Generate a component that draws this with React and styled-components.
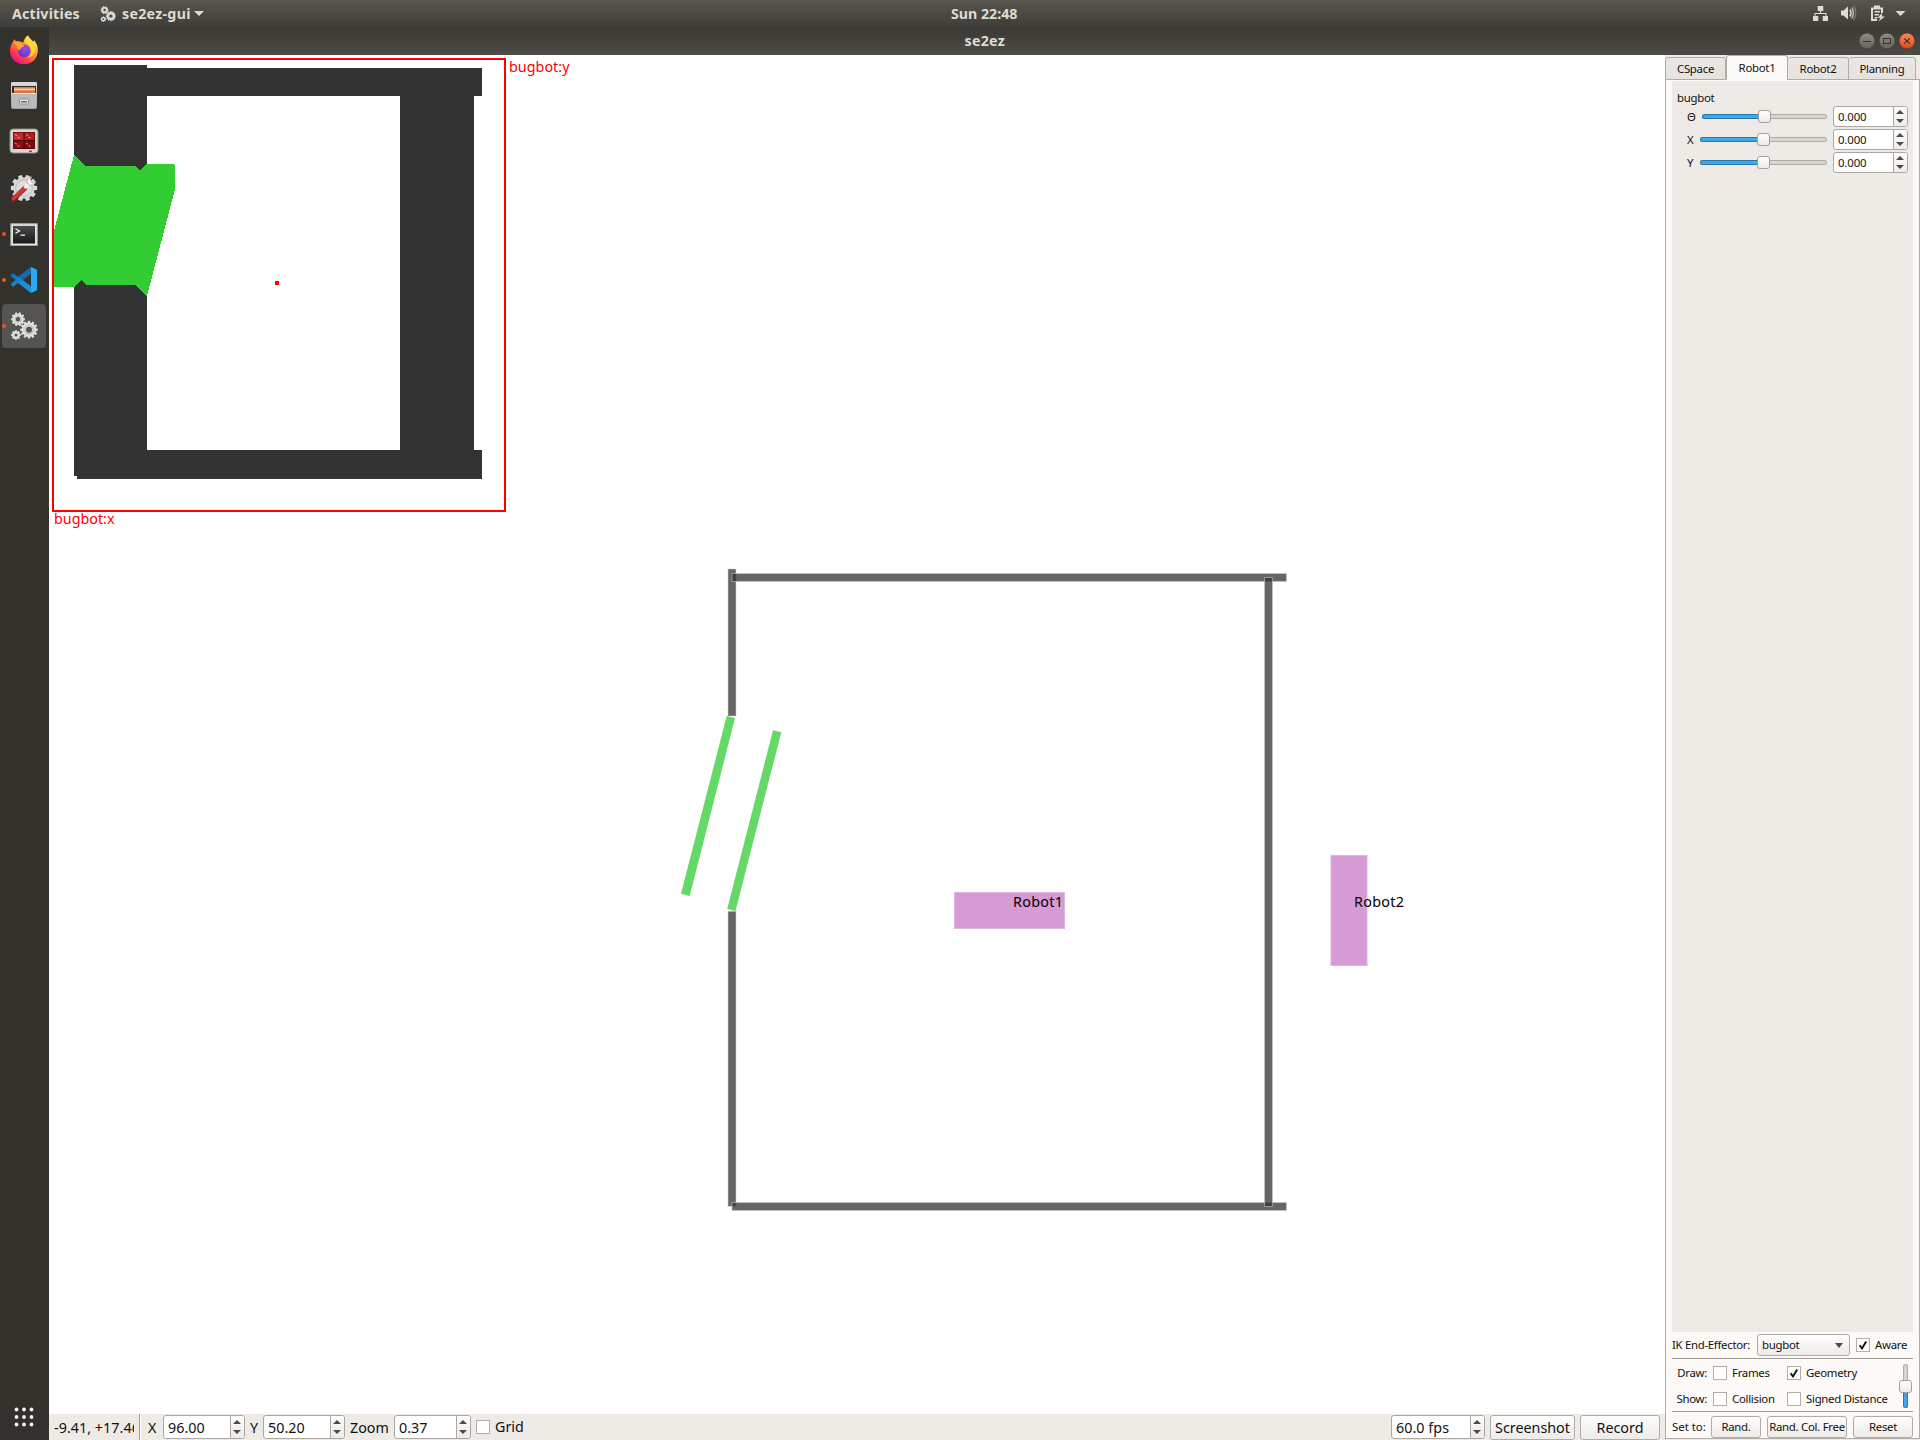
import React from "react";
import styled, { createGlobalStyle, css } from "styled-components";

const Global = createGlobalStyle`
  * { box-sizing: border-box; }
  html, body { margin: 0; padding: 0; }
  body {
    width: 1920px; height: 1440px; overflow: hidden; background: #fff;
    font-family: "Noto Sans", "Open Sans", sans-serif; color: #111;
  }
  svg { display: block; flex: none; }
`;

/* ---------- shell ---------- */
const Desktop = styled.div`
  width: 1920px; height: 1440px; display: flex; flex-direction: column; overflow: hidden;
`;
const TopBar = styled.header`
  height: 27px; flex: none; display: grid; grid-template-columns: 939px auto 1fr;
  align-items: center; padding: 0 14px 0 12px;
  background: linear-gradient(#59564e, #3e3d38);
  color: #dfdbd2; font-weight: 700; font-size: 14.2px; line-height: 26px;
`;
const TopLeft = styled.div`display: flex; align-items: center;`;
const TopRight = styled.div`display: flex; align-items: center; justify-content: flex-end;`;
const Word = styled.span`
  display: block; width: ${(p) => p.$w}px; margin-left: ${(p) => p.$ml || 0}px;
  letter-spacing: ${(p) => p.$ls || 0}px; white-space: nowrap; overflow: visible;
  padding-bottom: ${(p) => p.$up || 0}px;
`;
const Below = styled.div`flex: 1; display: flex; min-height: 0;`;
const Dock = styled.nav`
  width: 49px; flex: none; background: #33312c; display: flex; flex-direction: column;
`;
const DockItem = styled.div`
  height: 46px; width: 49px; flex: none; padding: 1px 3px 1px 2px; display: flex;
`;
const DockTile = styled.div`
  width: 44px; height: 44px; border-radius: 4px; display: flex; align-items: center;
  background: ${(p) => (p.$active ? "#555450" : "transparent")};
`;
const Dot = styled.i`
  width: 4px; height: 4px; border-radius: 2px; flex: none;
  background: ${(p) => (p.$on ? "#e95420" : "transparent")};
`;
const AppsButton = styled.div`margin-top: auto; padding: 0 0 13px 14px;`;
const Window = styled.main`flex: 1; display: flex; flex-direction: column; min-width: 0;`;
const TitleBar = styled.div`
  height: 28px; flex: none; display: grid; grid-template-columns: 1fr auto 1fr; align-items: center;
  background: linear-gradient(#3a3934, #4d4b45); padding: 0 5px 0 5px;
  color: #dfdbd2; font-weight: 700; font-size: 14.2px; line-height: 28px;
`;
const WinButtons = styled.div`display: flex; gap: 4px; justify-content: flex-end;`;
const WinBody = styled.div`flex: 1; display: flex; min-height: 0;`;
const Viewer = styled.section`width: 1616px; display: flex; flex-direction: column;`;
const Scene = styled.svg`
  background: #fff;
  text { font-family: "Noto Sans", sans-serif; font-size: 14.3px; }
`;

/* ---------- widgets ---------- */
const face = css`
  border: 1px solid #b1aca6; border-radius: 3px;
  background: linear-gradient(#fefefe, #eeebe8);
`;
const SpinRoot = styled.div`
  display: flex; flex: none; width: ${(p) => p.$w}px; height: ${(p) => p.$h}px;
  border: 1px solid #aca7a1; border-radius: 3px; background: #fff; overflow: hidden;
`;
const SpinValue = styled.div`
  flex: 1; display: flex; align-items: center; padding-left: 4px; white-space: nowrap;
  font-size: ${(p) => p.$fs}px; letter-spacing: ${(p) => p.$ls}px;
`;
const SpinArrows = styled.div`
  width: 14px; border-left: 1px solid #aca7a1; background: linear-gradient(#fdfdfc, #eeebe8);
  display: flex; flex-direction: column; align-items: center; justify-content: center;
  gap: ${(p) => (p.$h > 22 ? 6 : 5)}px; padding-right: 1px;
`;
const Tri = styled.i`
  width: 0; height: 0; border: 4px solid transparent;
  ${(p) => (p.$up
    ? "border-top: 0; border-bottom: 4px solid #4a4a4a;"
    : "border-bottom: 0; border-top: 4px solid #4a4a4a;")}
`;
const Spin = ({ w, h = 24, fs = 14.3, ls = 0.05, children }) => (
  <SpinRoot $w={w} $h={h}>
    <SpinValue $fs={fs} $ls={ls}>{children}</SpinValue>
    <SpinArrows $h={h}><Tri $up /><Tri /></SpinArrows>
  </SpinRoot>
);
const Button = styled.button`
  ${face} flex: none; padding: 0; width: ${(p) => p.$w}px; height: ${(p) => p.$h}px;
  font: inherit; color: #111; white-space: nowrap; letter-spacing: inherit;
  display: flex; align-items: center; justify-content: center;
`;
const Box = styled.span`
  width: 14px; height: 14px; flex: none; border: 1px solid #b3aea8; background: #fff; display: flex;
  align-items: center; justify-content: center; margin-right: ${(p) => p.$gap || 5}px;
`;
const Check = ({ on, gap }) => (
  <Box $gap={gap}>
    {on && (
      <svg width="10" height="10" viewBox="0 0 10 10">
        <path d="M1.6 5.2L4 8.4L8.2 1.4" fill="none" stroke="#111" strokeWidth="1.9" />
      </svg>
    )}
  </Box>
);
const Caption = styled.span`display: block; padding-bottom: 1.5px; white-space: nowrap;`;

/* ---------- status bar ---------- */
const StatusBar = styled.footer`
  height: 26px; flex: none; background: #eeebe7; display: flex; align-items: center;
  font-size: 14.3px; padding: 0 5px 0 5px;
`;
const Coords = styled.div`width: 80px; overflow: hidden; white-space: nowrap; letter-spacing: 0.05px;`;
const VLine = styled.i`
  width: 2px; height: 26px; margin: 0 7px 0 5px; background: #fff; border-left: 1px solid #a39e98;
`;
const Spacer = styled.div`flex: 1;`;

/* ---------- side panel ---------- */
const Side = styled.aside`
  width: 255px; background: #eeebe7; display: flex; flex-direction: column; padding: 0 0 1px 0;
  font-size: 11.4px; letter-spacing: -0.28px;
`;
const Tabs = styled.div`display: flex; align-items: flex-end; height: 25px; flex: none;`;
const Tab = styled.div`
  width: ${(p) => p.$w}px; height: ${(p) => (p.$on ? 25 : 23)}px;
  border: 1px solid #b1aca6; border-left-width: ${(p) => (p.$first || p.$on ? 1 : 0)}px;
  border-bottom: ${(p) => (p.$on ? "0" : "1px solid #b1aca6")};
  border-radius: 3px 3px 0 0;
  background: ${(p) => (p.$on ? "#fcfaf8" : "linear-gradient(#ebe7e4, #e6e2de)")};
  display: flex; align-items: center; justify-content: center;
  padding-bottom: ${(p) => (p.$on ? 2 : 1)}px;
`;
const TabRest = styled.div`flex: 1; height: 1px; background: #b1aca6;`;
const Pane = styled.div`
  flex: 1; border: 1px solid #b1aca6; border-top: 0; background: #fcf9f7;
  padding: 1px 6px 0 6px; display: flex; flex-direction: column;
`;
const Joints = styled.div`height: 1251px; background: #eeebe7; padding: 8px 5px 0 5px;`;
const JointsTitle = styled.div`height: 16px; line-height: 18px;`;
const Joint = styled.div`height: 23px; display: flex; align-items: center; padding-left: 10px;`;
const JointName = styled.span`width: ${(p) => p.$w}px;`;
const Track = styled.div`
  width: ${(p) => p.$w}px; height: 13px; display: flex; align-items: center; margin-right: 6px;
`;
const Fill = styled.i`
  width: ${(p) => p.$w}px; height: 5px; border: 1px solid #2b78ad; border-right: 0;
  border-radius: 3px 0 0 3px; background: #43a8ea;
`;
const Handle = styled.i`
  width: 13px; height: 13px; ${face} flex: none; border-color: #a39e98;
`;
const Rest = styled.i`
  flex: 1; height: 5px; border: 1px solid #b1aca6; border-left: 0;
  border-radius: 0 3px 3px 0; background: #d8d5d1;
`;
const IkRow = styled.div`height: 26px; display: flex; align-items: center;`;
const Combo = styled.div`
  ${face} width: 93px; height: 22px; display: flex; align-items: center;
  justify-content: space-between; padding: 0 6px 0 4px; margin-right: 6px;
`;
const HLine = styled.div`height: 1px; background: #9f9b96; flex: none;`;
const Options = styled.div`height: 52px; display: flex; justify-content: space-between; padding-right: 1px;`;
const OptionGrid = styled.div`
  display: grid; grid-template-columns: 41px 74px 100px; grid-template-rows: 26px 26px;
  align-items: center; padding-top: 1px;
`;
const OptionName = styled.span`text-align: right; padding: 0 6px 1.5px 0;`;
const Option = styled.span`display: flex; align-items: center; white-space: nowrap;`;
const VSlider = styled.div`
  width: 13px; height: 44px; margin-top: 5px; display: flex; flex-direction: column; align-items: center;
`;
const VRest = styled.i`width: 5px; height: 16px; border: 1px solid #b1aca6; border-bottom: 0; border-radius: 3px 3px 0 0; background: #d8d5d1;`;
const VFill = styled.i`width: 5px; flex: 1; border: 1px solid #2b78ad; border-top: 0; border-radius: 0 0 3px 3px; background: #43a8ea;`;
const SetRow = styled.div`flex: 1; display: flex; align-items: center; gap: 6px; padding-top: 3px;`;

/* ---------- drawings ---------- */
function gear(cx, cy, r, teeth, hole) {
  const pts = [];
  const step = (Math.PI * 2) / teeth;
  for (let i = 0; i < teeth; i++) {
    const a = i * step;
    [[-0.34, 0.8], [-0.24, 1], [0.24, 1], [0.34, 0.8]].forEach(([o, k]) => {
      pts.push(`${(cx + r * k * Math.cos(a + o * step)).toFixed(2)} ${(cy + r * k * Math.sin(a + o * step)).toFixed(2)}`);
    });
  }
  return `M${pts.join("L")}Z M${cx + hole} ${cy}a${hole} ${hole} 0 1 0 ${-2 * hole} 0a${hole} ${hole} 0 1 0 ${2 * hole} 0Z`;
}
const Gears = ({ size, color = "#dededc" }) => (
  <svg width={size} height={size} viewBox="0 0 28 28">
    <g fill={color} fillRule="evenodd">
      <path d={gear(8, 7.2, 7, 10, 2.2)} />
      <path d={gear(19, 17.7, 8.9, 12, 3)} />
      <path d={gear(6, 23, 4.9, 8, 1.5)} />
    </g>
    <circle cx="19" cy="17.700" r="4.100" fill="none" stroke="#b4b4b1" strokeWidth=".9" />
    <circle cx="8" cy="7.200" r="3" fill="none" stroke="#b4b4b1" strokeWidth=".8" />
  </svg>
);
const Firefox = () => (
  <svg width="30" height="30" viewBox="0 0 30 30">
    <defs>
      <linearGradient id="ff" x1=".85" y1=".1" x2=".25" y2=".95">
        <stop offset="0" stopColor="#fff44f" /><stop offset=".4" stopColor="#ff9a2e" />
        <stop offset=".75" stopColor="#ff3b4d" /><stop offset="1" stopColor="#e3148c" />
      </linearGradient>
      <radialGradient id="fp" cx=".6" cy=".3" r=".8">
        <stop offset="0" stopColor="#a646f0" /><stop offset="1" stopColor="#4b3fc0" />
      </radialGradient>
    </defs>
    <path d="M19 .3C20 3 22.500 4.500 24.500 7C24.800 6 25 5.500 25 5C28 8.500 29 12 28.800 16C28.500 24 22.500 29.300 15 29.300C7 29.300 1 23.500 1 16C1 12 2.200 9 4.200 6.500C4.300 5.500 4.600 4.700 5.300 4.200C5.800 5.300 6.600 6 7.500 6.400C8.700 5.800 10 6 11 6.800C12.500 6.600 13.500 7.300 14 8C15 5.500 16 2 19 .3Z" fill="url(#ff)" />
    <circle cx="15.200" cy="15.700" r="6.300" fill="url(#fp)" />
    <path d="M4.500 7.500C7 6 9.500 7 11 8.500C12.500 9.500 14.500 9.500 15 10.500C14.500 12 12.500 12 12 13.500C11 14.500 10 15 9.500 15.500C9 14 8 12 8 10.500Z" fill="#ffa62b" />
    <path d="M16 5C16.500 8 21.500 10 22 15C22.500 19 20.500 21.500 18.500 22.500C24 22 26.500 18 26 14C25.500 9 19.500 6.500 19 1C17.500 2 16.200 3.500 16 5Z" fill="#ffdb3c" opacity=".8" />
  </svg>
);
const Files = () => (
  <svg width="28" height="30" viewBox="0 0 28 30">
    <defs><linearGradient id="fl" x1="0" y1="0" x2="0" y2="1"><stop offset="0" stopColor="#dcdcdc" /><stop offset="1" stopColor="#9c9c9c" /></linearGradient></defs>
    <rect x="1" y="1" width="26" height="27" rx="2" fill="url(#fl)" />
    <rect x="1" y="1" width="26" height="3" rx="1.500" fill="#d8d8d8" />
    <rect x="2" y="5" width="24" height="7" fill="#3a2a20" />
    <rect x="4" y="6" width="21" height="6" fill="#d9793a" />
    <rect x="4" y="7.500" width="21" height="1.800" fill="#f2d3b0" />
    <rect x="2" y="12" width="24" height="15" fill="#b9b9b9" />
    <rect x="2" y="12" width="24" height="1" fill="#ececec" />
    <rect x="9.500" y="18" width="9" height="5" rx="1" fill="#e9e9e9" stroke="#8b8b8b" />
    <rect x="11" y="20" width="6" height="1.500" fill="#666" />
  </svg>
);
const Terminator = () => (
  <svg width="30" height="30" viewBox="0 0 30 30">
    <rect x="1" y="2" width="28" height="24" rx="3" fill="#d7d7d2" stroke="#8f8f8a" />
    <rect x="4" y="5" width="22" height="17" fill="#4a0505" />
    <rect x="4.500" y="5.500" width="10" height="7.500" fill="#c3272b" />
    <rect x="15.500" y="5.500" width="10" height="7.500" fill="#b01c20" />
    <rect x="4.500" y="14" width="10" height="7.500" fill="#8d0d10" />
    <rect x="15.500" y="14" width="10" height="7.500" fill="#7d0a0d" />
    <g stroke="#f0b0a8" fill="none" strokeWidth=".9">
      <path d="M6 7.500l2 1.300M8.500 10.500h2M17 7.500l2 1.300M19.500 10.500h2M6 16l2 1.300M8.500 19h2M17 16l2 1.300M19.500 19h2" />
    </g>
    <rect x="20" y="23.500" width="3" height="1.500" fill="#e23" />
  </svg>
);
const Settings = () => (
  <svg width="28" height="28" viewBox="0 0 28 28">
    <path d={gear(14, 14, 13.3, 10, 3)} fill="#d9d9d7" fillRule="evenodd" />
    <circle cx="14" cy="14" r="8.300" fill="#dededc" stroke="#b9b9b6" />
    <path d="M3.500 25L14.500 14.500" stroke="#9c1f1f" strokeWidth="5" strokeLinecap="round" />
    <path d="M3.500 24.500L14 14.500" stroke="#d33a36" strokeWidth="3.400" strokeLinecap="round" />
    <path d="M14.500 14L18.500 10" stroke="#f1f1ef" strokeWidth="3.400" />
    <path d="M21.500 2.800A4.300 4.300 0 1 0 25.600 7.400L22.500 8.800L20.200 6.600Z" fill="#f4f4f2" stroke="#999" strokeWidth=".7" />
  </svg>
);
const Terminal = () => (
  <svg width="28" height="24" viewBox="0 -.7 28 24">
    <defs><linearGradient id="tm" x1="0" y1="0" x2="0" y2="1"><stop offset="0" stopColor="#4b4b4b" /><stop offset="1" stopColor="#181818" /></linearGradient></defs>
    <rect x=".8" y="1" width="26.500" height="22" fill="#e4e4e2" stroke="#a2a2a0" />
    <rect x="3" y="3.200" width="22" height="17.600" fill="url(#tm)" />
    <path d="M5.500 6L9.500 8.300L5.500 10.600M10.500 12.500H15" stroke="#f5f5f5" strokeWidth="1.300" fill="none" />
  </svg>
);
const Code = () => (
  <svg width="28" height="28" viewBox="0 0 28 28">
    <path d="M.8 9L3.200 7.200L21 20.500V27L1 10.300Z" fill="#1279c2" />
    <path d="M.8 19L3.200 20.800L21 7.500V1L1 17.700Z" fill="#1583cf" />
    <path d="M21 1V7.500L12.500 14L8 10.800Z" fill="#0f6cb3" />
    <path d="M8 17L12.500 14L21 20.500V27Z" fill="#1b8edb" />
    <path d="M21 1L27 3.700V24.300L21 27Z" fill="#2ca8f0" />
  </svg>
);

const dock = [
  { icon: <Firefox /> }, { icon: <Files /> }, { icon: <Terminator /> }, { icon: <Settings /> },
  { icon: <Terminal />, on: true }, { icon: <Code />, on: true },
  { icon: <Gears size={28} />, on: true, active: true },
];
const IconSlot = styled.span`width: 40px; display: flex; justify-content: center; padding-right: 4px;`;

const Caret = ({ color = "#dfdbd2", w = 10 }) => (
  <svg width={w} height="5" viewBox="0 0 10 5" preserveAspectRatio="none"><path d="M0 0H10L5 5Z" fill={color} /></svg>
);
const Tray = () => (
  <svg width="94" height="18" viewBox="1812 5 94 18">
    <g fill="#dfdbd2">
      <path d="M1817.700 6H1823.300V11H1821V13H1826.500V16H1828V21H1822.700V16H1825.500V14H1815.500V16H1818.300V21H1813V16H1814.500V13H1820V11H1817.700Z" />
      <path d="M1841 10.500H1843.500L1848 6.500V19.500L1843.500 15.500H1841Z" />
      <path d="M1850 9.500Q1852 13 1850 16.500" stroke="#dfdbd2" strokeWidth="1.500" fill="none" />
      <path d="M1851.800 7.500Q1854.800 13 1851.800 18.500" stroke="#b7b4ac" strokeWidth="1.500" fill="none" />
      <path d="M1853.500 6Q1858 13 1853.500 20" stroke="#77756e" strokeWidth="1.500" fill="none" />
      <path fillRule="evenodd" d="M1874 5.500H1880V7.500H1883V13H1881V9.500H1873V19H1877V21H1871V7.500H1874Z" />
      <path d="M1874.500 11H1880V12.500H1874.500ZM1874.500 14H1879V15.500H1874.500ZM1874.500 17H1877.500V18.500H1874.500Z" />
      <path d="M1882 13L1877.500 17.700H1880.500L1878.500 21.500L1885 16.500H1882Z" />
      <path d="M1895.500 11H1905.500L1900.500 16Z" />
    </g>
  </svg>
);
const WinBtn = ({ kind }) => {
  const close = kind === "close";
  return (
    <svg width="16" height="16" viewBox="0 0 16 16">
      <defs>
        <linearGradient id={`wb${kind}`} x1="0" y1="0" x2="0" y2="1">
          <stop offset="0" stopColor={close ? "#f58a66" : "#8e8c85"} />
          <stop offset="1" stopColor={close ? "#dd4814" : "#65635d"} />
        </linearGradient>
      </defs>
      <circle cx="8" cy="8" r="7.800" fill={`url(#wb${kind})`} stroke="#35342f" strokeWidth=".4" />
      {kind === "min" && <path d="M4 8.500H12" stroke="#33322d" />}
      {kind === "max" && <rect x="4.500" y="5.500" width="7" height="5" fill="none" stroke="#33322d" />}
      {close && <path d="M5.300 5.300L10.700 10.700M10.700 5.300L5.300 10.700" stroke="#33322d" strokeWidth="1.200" />}
    </svg>
  );
};

const walls = [
  [728, 569, 8, 147], [728, 911.3, 8, 295], [732, 573.5, 554.5, 8],
  [732, 1202.5, 554.5, 8], [1264.5, 577.5, 8, 629],
];
const World = () => (
  <Scene width="1616" height="1359" viewBox="49 55 1616 1359">
    <g shapeRendering="crispEdges">
      <path fill="#333" d="M74 65H147V68H482V96H474V450H482V479H77V476H74ZM147 96V450H400V96Z" fillRule="evenodd" />
      <path fill="#32cd32" d="M74 155L85.300 166H135.700L140 170L147 164H173L175 165V189L147 296L135.700 285H86.300L81.700 280.300L75 287H54V231Z" />
      <rect x="275" y="281" width="4" height="4" fill="red" />
      <rect x="53" y="59" width="452" height="452" fill="none" stroke="red" strokeWidth="2" />
    </g>
    <text x="509" y="72" fill="red" textLength="60.5">bugbot:y</text>
    <text x="54" y="524" fill="red" textLength="60.5">bugbot:x</text>
    {walls.map(([x, y, w, h], i) => (
      <rect key={i} x={x} y={y} width={w} height={h} fill="#333" fillOpacity=".75" stroke="#ccc" strokeOpacity=".55" strokeWidth="1" />
    ))}
    <g fill="#65d965">
      <path d="M726.700 716L735 718L689.700 896L681 893.700Z" />
      <path d="M773 730.300L781.300 732.300L735.500 911L727.200 909Z" />
    </g>
    <g fill="#d69ad6" stroke="#e0b4e0">
      <rect x="954.500" y="892.500" width="110" height="36" />
      <rect x="1331" y="855.500" width="36" height="110" />
    </g>
    <text x="1013" y="907" textLength="50">Robot1</text>
    <text x="1354" y="907" textLength="50">Robot2</text>
  </Scene>
);

const joints = [
  { name: "Θ", nameW: 15, w: 125, fill: 56 },
  { name: "X", nameW: 13, w: 127, fill: 57 },
  { name: "Y", nameW: 13, w: 127, fill: 57 },
];

export default function App() {
  return (
    <Desktop>
      <Global />
      <TopBar>
        <TopLeft>
          <Word $w={88} $ls={0.2}>Activities</Word>
          <Gears size={16} />
          <Word $w={67} $ml={6} $ls={0.3}>se2ez-gui</Word>
          <Word $w={10} $ml={5}><Caret /></Word>
        </TopLeft>
        <Word $w={67}>Sun 22:48</Word>
        <TopRight><Tray /></TopRight>
      </TopBar>
      <Below>
        <Dock>
          {dock.map((d, i) => (
            <DockItem key={i}>
              <DockTile $active={d.active}><Dot $on={d.on} /><IconSlot>{d.icon}</IconSlot></DockTile>
            </DockItem>
          ))}
          <AppsButton>
            <svg width="20" height="20" viewBox="14 1407 20 20">
              {[16.5, 24, 31.5].map((x) => [1409.5, 1417, 1424.5].map((y) => (
                <circle key={`${x}-${y}`} cx={x} cy={y} r="1.9" fill="#f2f1ef" />
              )))}
            </svg>
          </AppsButton>
        </Dock>
        <Window>
          <TitleBar>
            <span />
            <Word $w={40} $ls={0.3}>se2ez</Word>
            <WinButtons><WinBtn kind="min" /><WinBtn kind="max" /><WinBtn kind="close" /></WinButtons>
          </TitleBar>
          <WinBody>
            <Viewer>
              <World />
              <StatusBar>
                <Coords>-9.41, +17.46</Coords>
                <VLine />
                <Word $w={15}>X</Word>
                <Spin w={82}>96.00</Spin>
                <Word $w={13} $ml={5}>Y</Word>
                <Spin w={82}>50.20</Spin>
                <Word $w={44} $ml={5}>Zoom</Word>
                <Spin w={77}>0.37</Spin>
                <Word $w={5} />
                <Check gap={5} />
                <Word $w={30} $up={2}>Grid</Word>
                <Spacer />
                <Spin w={94}>60.0 fps</Spin>
                <Word $w={5} />
                <Button $w={85} $h={25}>Screenshot</Button>
                <Word $w={5} />
                <Button $w={80} $h={25}>Record</Button>
              </StatusBar>
            </Viewer>
            <Side>
              <Tabs>
                <Tab $w={61} $first>CSpace</Tab>
                <Tab $w={62} $on>Robot1</Tab>
                <Tab $w={61}>Robot2</Tab>
                <Tab $w={67}>Planning</Tab>
                <TabRest />
              </Tabs>
              <Pane>
                <Joints>
                  <JointsTitle>bugbot</JointsTitle>
                  {joints.map((j) => (
                    <Joint key={j.name}>
                      <JointName $w={j.nameW}>{j.name}</JointName>
                      <Track $w={j.w}><Fill $w={j.fill} /><Handle /><Rest /></Track>
                      <Spin w={75} h={21} fs={11.4} ls={-0.15}>0.000</Spin>
                    </Joint>
                  ))}
                </Joints>
                <IkRow>
                  <Word $w={85} $ls={-0.3} $up={1.5}>IK End-Effector:</Word>
                  <Combo><Caption>bugbot</Caption><Caret color="#4a4a4a" w={8} /></Combo>
                  <Check on /><Caption>Aware</Caption>
                </IkRow>
                <HLine />
                <Options>
                  <OptionGrid>
                    <OptionName>Draw:</OptionName>
                    <Option><Check /><Caption>Frames</Caption></Option>
                    <Option><Check on /><Caption>Geometry</Caption></Option>
                    <OptionName>Show:</OptionName>
                    <Option><Check /><Caption>Collision</Caption></Option>
                    <Option><Check /><Caption>Signed Distance</Caption></Option>
                  </OptionGrid>
                  <VSlider><VRest /><Handle /><VFill /></VSlider>
                </Options>
                <HLine />
                <SetRow>
                  <Word $w={33}>Set to:</Word>
                  <Button $w={50} $h={22}>Rand.</Button>
                  <Button $w={80} $h={22}>Rand. Col. Free</Button>
                  <Button $w={60} $h={22}>Reset</Button>
                </SetRow>
              </Pane>
            </Side>
          </WinBody>
        </Window>
      </Below>
    </Desktop>
  );
}
